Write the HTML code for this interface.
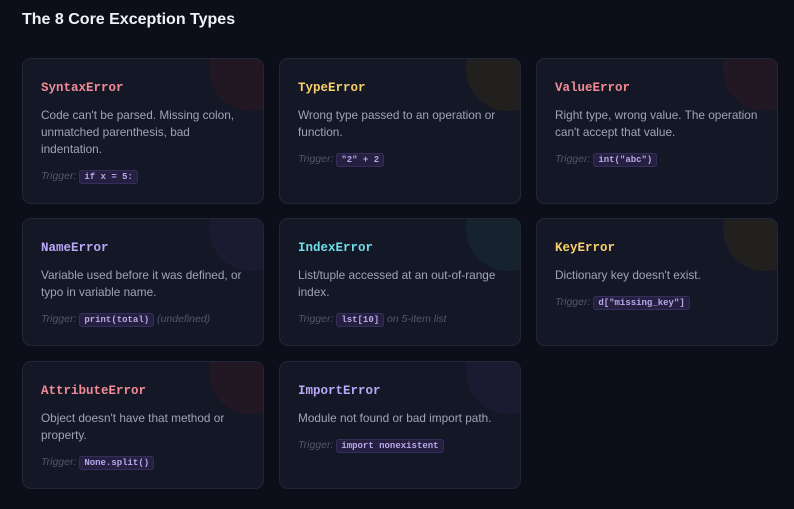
<!DOCTYPE html>
<html><head><meta charset="utf-8"><style>
*{box-sizing:border-box;margin:0;padding:0}
body{width:794px;height:509px;background:#0c0f19;font-family:"Liberation Sans","DejaVu Sans",sans-serif;overflow:hidden;position:relative}
h2{position:absolute;left:22px;top:11px;color:#f1f3f8;font-size:16px;font-weight:bold}
.card{position:absolute;width:242px;background:#141826;border:1px solid #222737;border-radius:9px;overflow:hidden;padding:22px 18px 0 18px}
.card::after{content:"";position:absolute;width:84px;height:84px;border-radius:50%;top:-32px;right:-30px;background:var(--c)}
.t{font-family:"Liberation Mono","DejaVu Sans Mono",monospace;font-weight:bold;font-size:12.5px;margin-bottom:12px;position:relative}
.d{color:#9ea4b5;font-size:11.8px;line-height:17px;position:relative}
.tr{color:#50576a;font-style:italic;font-size:10.5px;margin-top:12px;position:relative}
code{font-family:"Liberation Mono","DejaVu Sans Mono",monospace;font-style:normal;font-weight:bold;font-size:9px;color:#b8a8ea;background:#262040;border:1px solid #342e5c;border-radius:3px;padding:1px 4px}
</style></head><body>
<h2>The 8 Core Exception Types</h2>
<div class="card" style="left:22px;top:58px;height:146px;--c:#221824"><div class="t" style="color:#f28b95">SyntaxError</div><div class="d">Code can't be parsed. Missing colon, unmatched parenthesis, bad indentation.</div><div class="tr">Trigger: <code>if x = 5:</code></div></div>
<div class="card" style="left:279px;top:58px;height:146px;--c:#221f1f"><div class="t" style="color:#f8cf6a">TypeError</div><div class="d">Wrong type passed to an operation or function.</div><div class="tr">Trigger: <code>"2" + 2</code></div></div>
<div class="card" style="left:536px;top:58px;height:146px;--c:#221824"><div class="t" style="color:#f28b95">ValueError</div><div class="d">Right type, wrong value. The operation can't accept that value.</div><div class="tr">Trigger: <code>int("abc")</code></div></div>
<div class="card" style="left:22px;top:218px;height:128px;--c:#1b1a30"><div class="t" style="color:#b9a8f8">NameError</div><div class="d">Variable used before it was defined, or typo in variable name.</div><div class="tr">Trigger: <code>print(total)</code> (undefined)</div></div>
<div class="card" style="left:279px;top:218px;height:128px;--c:#16232e"><div class="t" style="color:#6fdde8">IndexError</div><div class="d">List/tuple accessed at an out-of-range index.</div><div class="tr">Trigger: <code>lst[10]</code> on 5-item list</div></div>
<div class="card" style="left:536px;top:218px;height:128px;--c:#221f1f"><div class="t" style="color:#f8cf6a">KeyError</div><div class="d">Dictionary key doesn't exist.</div><div class="tr">Trigger: <code>d["missing_key"]</code></div></div>
<div class="card" style="left:22px;top:361px;height:128px;--c:#221824"><div class="t" style="color:#f28b95">AttributeError</div><div class="d">Object doesn't have that method or property.</div><div class="tr">Trigger: <code>None.split()</code></div></div>
<div class="card" style="left:279px;top:361px;height:128px;--c:#1b1a30"><div class="t" style="color:#b9a8f8">ImportError</div><div class="d">Module not found or bad import path.</div><div class="tr">Trigger: <code>import nonexistent</code></div></div>
</body></html>
